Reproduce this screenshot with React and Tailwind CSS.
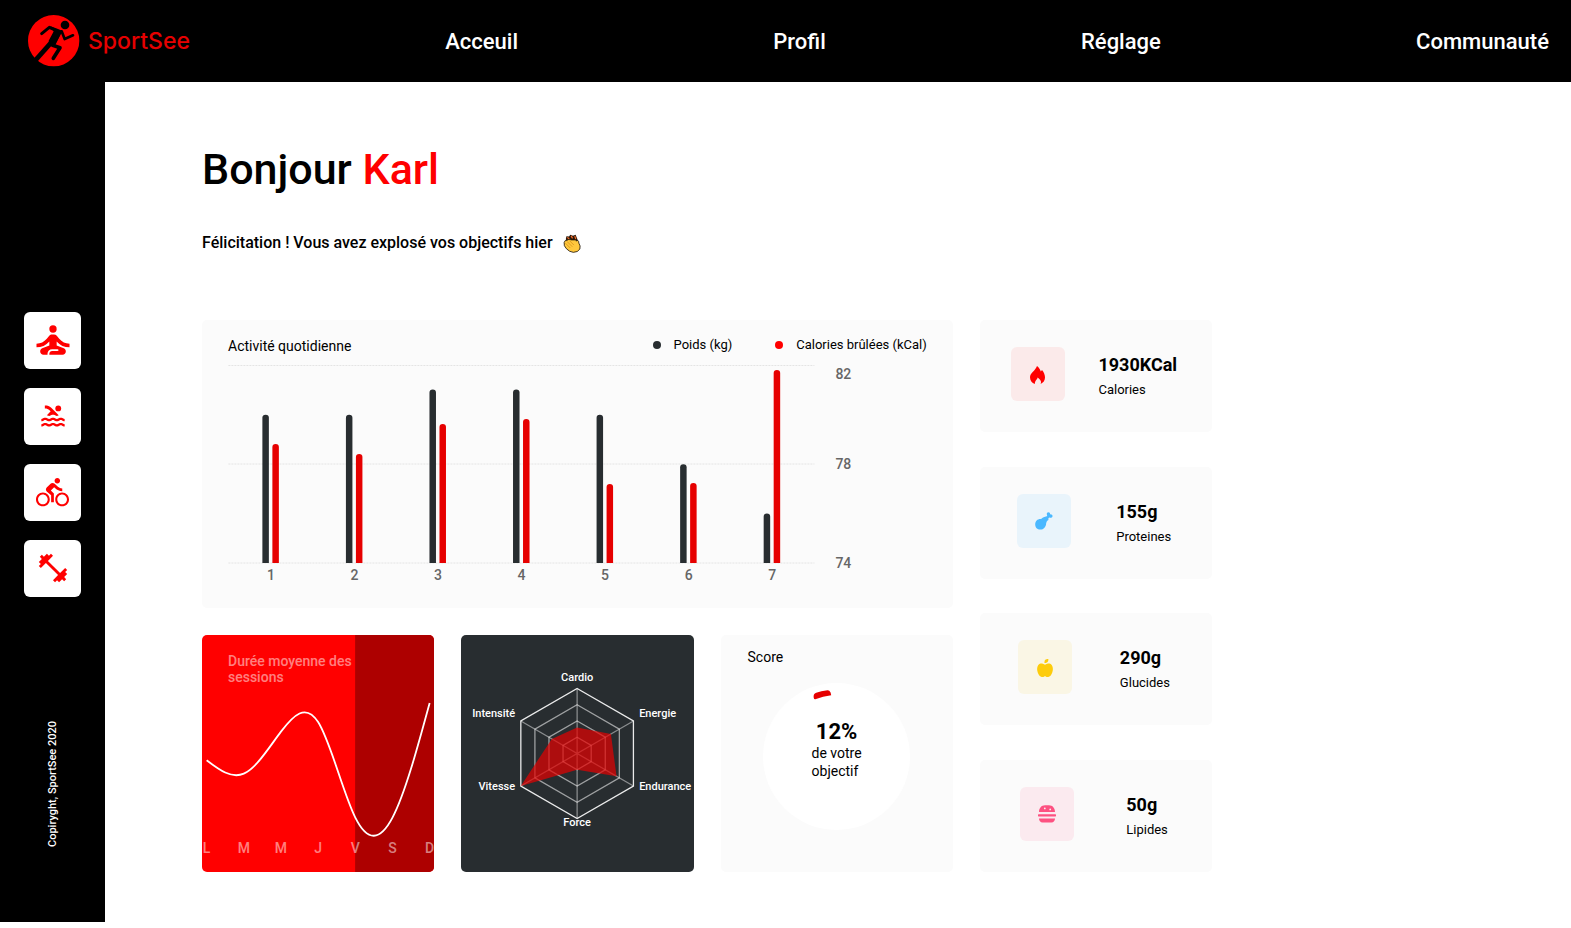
import React from "react";
import { MdSelfImprovement, MdPool, MdDirectionsBike, MdFitnessCenter } from "react-icons/md";
import { FaAppleAlt } from "react-icons/fa";

const navItems = ["Acceuil", "Profil", "Réglage", "Communauté"];

function Logo() {
  return (
    <a href="#" className="flex items-center gap-2">
      <svg viewBox="0 0 156 156" className="size-[52px]" aria-hidden="true">
        <circle cx="77" cy="77" r="77" fill="#ff0000" />
        <circle cx="111" cy="30" r="13" fill="#000" />
        <g fill="none" stroke="#000" strokeLinecap="round" strokeLinejoin="round">
          <path d="M41 56 L64 37 L84 46" strokeWidth="9" />
          <path d="M101 49 L110 72 L135 61" strokeWidth="8" />
          <path d="M87 54 L71 84" strokeWidth="22" strokeLinecap="butt" />
          <path d="M70 82 L22 136" strokeWidth="14" strokeLinecap="butt" />
          <path d="M74 91 L96 98 L76 130" strokeWidth="11" />
        </g>
        <path d="M66 33 L92 43 L104 48 L94 66 L82 90 L60 86 L78 51 Z" fill="#000" />
      </svg>
      <span className="font-['Inter',sans-serif] text-[23px] font-medium leading-7 text-[#e60000]">SportSee</span>
    </a>
  );
}

function Header() {
  return (
    <header className="bg-black pl-7 pr-[22px]">
      <nav className="flex h-[82px] items-center justify-between">
        <Logo />
        {navItems.map((item) => (
          <a key={item} href="#" className="pt-px text-[22px] font-medium leading-7 text-white">
            {item}
          </a>
        ))}
      </nav>
    </header>
  );
}

function SideButton({ label, children }) {
  return (
    <button
      type="button"
      aria-label={label}
      className="flex size-[57px] items-center justify-center rounded-md bg-white pb-px text-[#ff0000]"
    >
      {children}
    </button>
  );
}

function Sidebar() {
  return (
    <aside className="flex w-[105px] shrink-0 flex-col items-center justify-between self-start bg-black pb-[75px] pt-[230px]">
      <div className="flex flex-col gap-[19px]">
        <SideButton label="Yoga"><MdSelfImprovement size={44} /></SideButton>
        <SideButton label="Natation"><MdPool size={28} /></SideButton>
        <SideButton label="Vélo"><MdDirectionsBike size={33} /></SideButton>
        <SideButton label="Musculation"><MdFitnessCenter size={34} /></SideButton>
      </div>
      <p className="mt-[124px] rotate-180 text-[11px] font-medium leading-4 text-white [writing-mode:vertical-rl]">
        Copiryght, SportSee 2020
      </p>
    </aside>
  );
}

function Clap() {
  return (
    <svg viewBox="0 0 54 58" className="h-[19px] w-[18px]" role="img" aria-label="Bravo">
      <path d="M8 16 L10 7 L18 8 L22 2 L30 5 L38 2 L42 12 L46 22 L30 24 L12 24 Z" fill="#2b1608" />
      <path d="M14 11l4 4M25 7l3 5M36 8l2 6" stroke="#f06a2a" strokeWidth="4" strokeLinecap="round" />
      <path
        d="M3 26 Q5 18 12 19 Q17 14 25 18 L34 18 Q40 16 41 22 L44 19 Q48 21 48 28 Q54 36 51 46 Q45 56 31 56 Q19 55 10 45 Q1 36 3 26 Z"
        fill="#ffc83d"
        stroke="#1d1408"
        strokeWidth="2.5"
      />
      <path d="M8 29 L21 42 M13 24 L27 38 M20 21 L32 33" stroke="#c98312" strokeWidth="2" strokeLinecap="round" />
    </svg>
  );
}

const activity = [
  { kg: 80, redTop: 124 },
  { kg: 80, redTop: 134 },
  { kg: 81, redTop: 104 },
  { kg: 81, redTop: 99 },
  { kg: 80, redTop: 164 },
  { kg: 78, redTop: 163 },
  { kg: 76, redTop: 50 },
];

function Bar({ x, top, fill }) {
  const base = 243;
  return (
    <path
      d={`M${x} ${base} V${top + 3} a3.25 3 0 0 1 6.5 0 V${base} Z`}
      fill={fill}
    />
  );
}

function ActivityChart() {
  return (
    <section className="col-span-3 h-72 rounded-[5px] bg-[#fbfbfb]">
      <div className="flex items-start justify-between px-[26px] pt-4">
        <h2 className="pt-[2px] text-sm leading-4">Activité quotidienne</h2>
        <ul className="flex gap-[43px] pt-px text-[13px] leading-4">
          <li className="flex items-center gap-[13px]">
            <span className="size-2 rounded-full bg-[#282d30]" />
            Poids (kg)
          </li>
          <li className="flex items-center gap-[13px]">
            <span className="size-2 rounded-full bg-[#ff0000]" />
            Calories brûlées (kCal)
          </li>
        </ul>
      </div>
      <svg viewBox="0 34 750 240" className="h-[240px] w-full" role="img" aria-label="Activité quotidienne">
        {[45.5, 144, 243].map((y) => (
          <line key={y} x1="26" x2="612" y1={y} y2={y} stroke="#e4e4e4" strokeDasharray="2 1" />
        ))}
        {activity.map((d, i) => {
          const x = 60 + i * 83.55;
          const top = d.kg === 81 ? 69.5 : 243 - (d.kg - 74) * 24.7;
          return (
            <g key={i}>
              <Bar x={x} top={top} fill="#282d30" />
              <Bar x={x + 10} top={d.redTop} fill="#e60000" />
              <text x={x + 8.5} y="260" textAnchor="middle" fontSize="14" fontWeight="500" fill="#666">
                {i + 1}
              </text>
            </g>
          );
        })}
        <g fontSize="14" fontWeight="500" fill="#666">
          <text x="633" y="59">82</text>
          <text x="633" y="149">78</text>
          <text x="633" y="248">74</text>
        </g>
      </svg>
    </section>
  );
}

// Control points of a natural cubic spline along one coordinate.
function controlPoints(v) {
  const n = v.length - 1;
  const a = [0];
  const b = [2];
  const r = [v[0] + 2 * v[1]];
  for (let i = 1; i < n - 1; i++) {
    a[i] = 1;
    b[i] = 4;
    r[i] = 4 * v[i] + 2 * v[i + 1];
  }
  a[n - 1] = 2;
  b[n - 1] = 7;
  r[n - 1] = 8 * v[n - 1] + v[n];
  for (let i = 1; i < n; i++) {
    const m = a[i] / b[i - 1];
    b[i] -= m;
    r[i] -= m * r[i - 1];
  }
  a[n - 1] = r[n - 1] / b[n - 1];
  for (let i = n - 2; i >= 0; i--) a[i] = (r[i] - a[i + 1]) / b[i];
  b[n - 1] = (v[n] + a[n - 1]) / 2;
  for (let i = 0; i < n - 1; i++) b[i] = 2 * v[i + 1] - a[i + 1];
  return [a, b];
}

function naturalPath(xs, ys) {
  const [ax, bx] = controlPoints(xs);
  const [ay, by] = controlPoints(ys);
  let d = `M${xs[0]} ${ys[0]}`;
  for (let i = 0; i < xs.length - 1; i++) {
    d += ` C${ax[i]} ${ay[i]} ${bx[i]} ${by[i]} ${xs[i + 1]} ${ys[i + 1]}`;
  }
  return d;
}

const sessions = [30, 23, 45, 50, 0, 0, 60];
const days = ["L", "M", "M", "J", "V", "S", "D"];

function SessionsChart() {
  const xs = sessions.map((_, i) => 4.5 + i * 37.17);
  const ys = sessions.map((s) => 182.6 - s * 1.91);
  return (
    <section className="grid h-[237px] overflow-hidden rounded-[5px] bg-[#ff0000]">
      <svg viewBox="0 0 232 237" className="col-start-1 row-start-1 h-[237px] w-full" role="img" aria-label="Durée moyenne des sessions">
        <rect x="153" y="0" width="80" height="237" fill="#ad0000" />
        <path d={naturalPath(xs, ys)} fill="none" stroke="#fff" strokeWidth="1.8" />
        {days.map((d, i) => (
          <text key={i} x={xs[i]} y="218" textAnchor="middle" fontSize="14" fontWeight="500" fill="#fff" fillOpacity="0.5">
            {d}
          </text>
        ))}
      </svg>
      <h2 className="col-start-1 row-start-1 w-[160px] pl-[26px] pt-[18px] text-sm font-medium leading-4 text-white/50">
        Durée moyenne des sessions
      </h2>
    </section>
  );
}

const radarValues = [80, 120, 140, 50, 200, 90];

function hexagon(radii) {
  return radii
    .map((r, i) => {
      const t = (i * Math.PI) / 3;
      return `${116 + r * Math.sin(t)},${118.5 - r * Math.cos(t)}`;
    })
    .join(" ");
}

function RadarChart() {
  return (
    <section className="h-[237px] overflow-hidden rounded-[5px] bg-[#282d30]">
      <svg viewBox="0 0 232 237" className="h-[237px] w-full" role="img" aria-label="Performance">
        <g fill="none" stroke="#fff">
          {[16.25, 32.5, 48.75].map((r) => (
            <polygon key={r} points={hexagon(Array(6).fill(r))} strokeOpacity="0.55" strokeWidth="1.3" />
          ))}
          <polygon points={hexagon(Array(6).fill(65))} strokeOpacity="0.9" strokeWidth="1.3" />
          <path
            d="M116 53.5V183.5M59.7 86L172.3 151M59.7 151L172.3 86"
            strokeOpacity="0.45"
            strokeWidth="1.3"
          />
        </g>
        <polygon points={hexagon(radarValues.map((v) => v * 0.325))} fill="#e60000" fillOpacity="0.7" />
        <g fill="#fff" fontSize="11" fontWeight="500">
          <text x="116" y="46" textAnchor="middle">Cardio</text>
          <text x="178" y="82">Energie</text>
          <text x="178" y="155">Endurance</text>
          <text x="116" y="191" textAnchor="middle">Force</text>
          <text x="54" y="155" textAnchor="end">Vitesse</text>
          <text x="54" y="82" textAnchor="end">Intensité</text>
        </g>
      </svg>
    </section>
  );
}

function ScoreCard() {
  return (
    <section className="flex h-[237px] flex-col rounded-[5px] bg-[#fbfbfb]">
      <h2 className="pl-[27px] pt-[14px] text-sm leading-4">Score</h2>
      <div className="mx-auto mt-[18px] grid size-[147px] place-items-center rounded-full bg-white">
        <svg viewBox="0 0 147 147" className="col-start-1 row-start-1 size-[147px]" aria-hidden="true">
          <path
            d="M52.3 16.3 Q51 16.5 50.7 14.7 Q50 11 53.2 9.8 Q58 7.8 64.5 7.2 Q66.3 7 67.6 9.4 L68.2 12.2 Q60 13 52.3 16.3 Z"
            fill="#e60000"
          />
        </svg>
        <div className="col-start-1 row-start-1 pb-[13px] text-sm leading-[18px]">
          <p className="text-center text-[22px] font-bold leading-6">12%</p>
          <p className="whitespace-nowrap">
            de votre
            <br />
            objectif
          </p>
        </div>
      </div>
    </section>
  );
}

function FlameIcon() {
  return (
    <svg viewBox="0 0 15 18" className="h-[18px] w-[15px]" aria-hidden="true">
      <path
        d="M7 0 C9.2 1.8 10.2 3.5 10.8 5.6 L12 3.9 C14 6.2 15 9 15 11.6 C15 14.6 13.3 16.8 10.6 18 C11.9 15.3 10.2 13.2 7.6 11.4 C7.4 13.4 4.6 14.6 4.9 18 C1.8 16.9 0 14.6 0 11.3 C0 6.9 5.6 4.5 7 0 Z"
        fill="currentColor"
      />
    </svg>
  );
}

function ChickenIcon() {
  return (
    <svg viewBox="0 0 18 18" className="size-[18px]" aria-hidden="true">
      <path
        d="M5.4 7 C7.3 7 7.2 5.3 9.3 5 L11.8 4.3 L12.2 3.6 C11.2 1.8 12 .3 13.4 .3 C14.6 .3 15.2 1.2 15.1 2.4 C16.5 2.2 17.6 3 17.5 4.2 C17.4 5.6 15.8 6.1 14.3 5.4 L13.4 6.2 L13.4 8.1 L12 9 L11.2 11 C11 15 8.8 17.6 5.3 17.6 C2.3 17.6 .2 15.6 .2 12.5 C.2 9.2 2.4 7 5.4 7 Z"
        fill="currentColor"
      />
    </svg>
  );
}

function BurgerIcon() {
  return (
    <svg viewBox="0 0 18 18" className="size-[18px]" fill="currentColor" aria-hidden="true">
      <path
        fillRule="evenodd"
        d="M1 7 C1 3 3.4 .2 7 .2 H11 C14.6 .2 17 3 17 7 Z M5.9 3.4 a.9 .9 0 1 0 1.8 0 a.9 .9 0 1 0 -1.8 0 M11.3 4.4 a.9 .9 0 1 0 1.8 0 a.9 .9 0 1 0 -1.8 0"
      />
      <rect x="0" y="9.2" width="18" height="2.2" rx=".6" />
      <path d="M1 13.6 H17 C17 16 15.6 17.5 13.5 17.5 H4.5 C2.4 17.5 1 16 1 13.6 Z" />
    </svg>
  );
}

const nutrition = [
  { value: "1930KCal", label: "Calories", tile: "bg-[#fbeaea] text-[#ff0000]", icon: <FlameIcon /> },
  { value: "155g", label: "Proteines", tile: "bg-[#e9f4fb] text-[#4ab8ff]", icon: <ChickenIcon /> },
  { value: "290g", label: "Glucides", tile: "bg-[#faf6e5] text-[#fdcc0c]", icon: <FaAppleAlt size={18} /> },
  { value: "50g", label: "Lipides", tile: "bg-[#fbeaef] text-[#fd5181]", icon: <BurgerIcon /> },
];

function NutritionCard({ value, label, tile, icon }) {
  return (
    <li className="flex h-28 items-center justify-around rounded-[5px] bg-[#fbfbfb] pb-1 pl-4 pr-5">
      <span className={"mr-1 flex size-[54px] items-center justify-center rounded-md pt-px " + tile}>{icon}</span>
      <div className="pt-2">
        <p className="text-lg font-bold leading-6">{value}</p>
        <p className="text-[13px] leading-[26px]">{label}</p>
      </div>
    </li>
  );
}

export default function App() {
  return (
    <div className="min-h-screen bg-white font-['Roboto',sans-serif] text-black">
      <Header />
      <div className="flex">
        <Sidebar />
        <main className="min-w-0 flex-1 px-[97px] pt-[61px]">
          <h1 className="text-[43px] font-medium leading-[52px]">
            Bonjour <span className="text-[#ff0000]">Karl</span>
          </h1>
          <p className="mt-9 flex items-center gap-[10px] text-base font-medium leading-6">
            Félicitation ! Vous avez explosé vos objectifs hier <Clap />
          </p>
          <div className="mt-[65px] grid w-full max-w-[1010px] grid-cols-4 gap-[27px]">
            <ActivityChart />
            <ul className="col-start-4 row-span-2 row-start-1 flex flex-col justify-between">
              {nutrition.map((n) => (
                <NutritionCard key={n.label} {...n} />
              ))}
            </ul>
            <SessionsChart />
            <RadarChart />
            <ScoreCard />
          </div>
        </main>
      </div>
    </div>
  );
}
